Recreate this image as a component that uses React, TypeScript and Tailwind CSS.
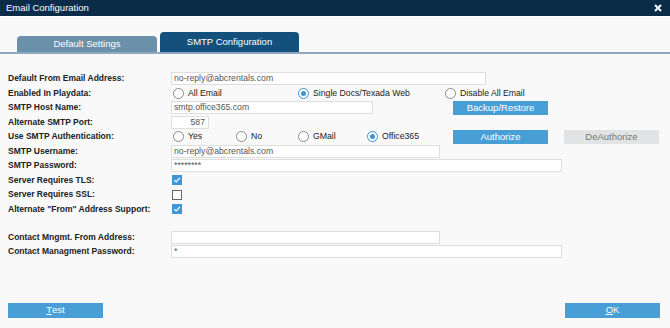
import React from "react";

const font = { fontFamily: '"Liberation Sans", Arial, sans-serif' };

function Radio({ checked, label }: { checked?: boolean; label: string }) {
  return (
    <div className="flex items-center gap-[4px]">
      {checked ? (
        <span className="w-[11px] h-[11px] rounded-full border border-[#3f93d1] bg-white flex items-center justify-center">
          <span className="w-[5px] h-[5px] rounded-full bg-[#3f93d1]" />
        </span>
      ) : (
        <span className="w-[11px] h-[11px] rounded-full border border-[#8a8a8a] bg-white" />
      )}
      <span className="text-[8.7px] text-[#222]">{label}</span>
    </div>
  );
}

function Check({ checked }: { checked?: boolean }) {
  return checked ? (
    <span className="ml-[1px] w-[10px] h-[10px] bg-[#3d97d3] flex items-center justify-center">
      <svg width="8" height="8" viewBox="0 0 8 8">
        <path d="M1.3 4.2 L3.2 6 L6.8 2" stroke="white" strokeWidth="1.2" fill="none" />
      </svg>
    </span>
  ) : (
    <span className="ml-[1px] w-[10px] h-[10px] bg-white border-[1.5px] border-[#666]" />
  );
}

function Input({ w, value, right }: { w: string; value?: string; right?: boolean }) {
  return (
    <div
      className={`${w} h-[13px] bg-white border border-[#dedede] text-[8.7px] text-[#555] leading-[11px] px-[2px] ${
        right ? "text-right pr-[3px]" : ""
      }`}
    >
      {value}
    </div>
  );
}

function Btn({ label, gray }: { label: React.ReactNode; gray?: boolean }) {
  return (
    <div
      className={`w-[95px] h-[14px] flex items-center justify-center text-[9.5px] ${
        gray ? "bg-[#e1e3e5] text-[#777]" : "bg-[#479fd6] text-white"
      }`}
    >
      {label}
    </div>
  );
}

function Row({ label, children }: { label: string; children?: React.ReactNode }) {
  return (
    <div className="flex items-center h-[14.5px]">
      <div className="w-[163px] text-[8.5px] font-bold text-[#222] whitespace-nowrap">{label}</div>
      <div className="flex items-center flex-1">{children}</div>
    </div>
  );
}

export default function App() {
  return (
    <div className="w-[670px] h-[328px] bg-[#f9f9f9] flex flex-col overflow-hidden" style={font}>
      <div className="h-[16px] bg-[#0b2c48] flex items-center justify-between pl-[6px] pr-[8px]">
        <span className="text-white text-[9.5px]">Email Configuration</span>
        <svg width="8" height="8" viewBox="0 0 8 8">
          <path d="M1 1 L7 7 M7 1 L1 7" stroke="white" strokeWidth="2" />
        </svg>
      </div>
      <div className="h-[1px] bg-white" />
      <div className="h-[35px] flex items-end pl-[17px] gap-[3px]">
        <div className="w-[140px] h-[16px] bg-[#6a90aa] rounded-t-[4px] flex items-center justify-center text-white text-[9.5px]">
          Default Settings
        </div>
        <div className="w-[139px] h-[20px] bg-[#13507b] rounded-t-[4px] flex items-end justify-center pb-[3px] text-white text-[9.5px]">
          SMTP Configuration
        </div>
      </div>
      <div className="h-[2px] bg-[#8ea8bd]" />
      <div className="flex flex-col pl-[8px] pt-[17.5px]">
        <Row label="Default From Email Address:">
          <Input w="w-[315px]" value="no-reply@abcrentals.com" />
        </Row>
        <Row label="Enabled In Playdata:">
          <div className="w-[2px]" />
          <div className="w-[125px]">
            <Radio label="All Email" />
          </div>
          <div className="w-[147px]">
            <Radio checked label="Single Docs/Texada Web" />
          </div>
          <Radio label="Disable All Email" />
        </Row>
        <Row label="SMTP Host Name:">
          <div className="w-[282px]">
            <Input w="w-[202px]" value="smtp.office365.com" />
          </div>
          <Btn label="Backup/Restore" />
        </Row>
        <Row label="Alternate SMTP Port:">
          <Input w="w-[38px]" value="587" right />
        </Row>
        <Row label="Use SMTP Authentication:">
          <div className="w-[2px]" />
          <div className="w-[63px]">
            <Radio label="Yes" />
          </div>
          <div className="w-[62px]">
            <Radio label="No" />
          </div>
          <div className="w-[69px]">
            <Radio label="GMail" />
          </div>
          <div className="w-[86px]">
            <Radio checked label="Office365" />
          </div>
          <Btn label="Authorize" />
          <div className="w-[16px]" />
          <Btn label="DeAuthorize" gray />
        </Row>
        <Row label="SMTP Username:">
          <Input w="w-[269px]" value="no-reply@abcrentals.com" />
        </Row>
        <Row label="SMTP Password:">
          <Input w="w-[391px]" value="********" />
        </Row>
        <Row label="Server Requires TLS:">
          <Check checked />
        </Row>
        <Row label="Server Requires SSL:">
          <Check />
        </Row>
        <Row label='Alternate "From" Address Support:'>
          <Check checked />
        </Row>
        <div className="h-[13.5px]" />
        <Row label="Contact Mngmt. From Address:">
          <Input w="w-[269px]" />
        </Row>
        <Row label="Contact Managment Password:">
          <Input w="w-[391px]" value="*" />
        </Row>
      </div>
      <div className="flex-1" />
      <div className="flex justify-between pl-[8px] pr-[10px] pb-[10px]">
        <div className="w-[95px] h-[15px] bg-[#479fd6] text-white text-[9.5px] flex items-center justify-center">
          <span className="underline">T</span>est
        </div>
        <div className="w-[95px] h-[15px] bg-[#479fd6] text-white text-[9.5px] flex items-center justify-center">
          <span className="underline">O</span>K
        </div>
      </div>
    </div>
  );
}
